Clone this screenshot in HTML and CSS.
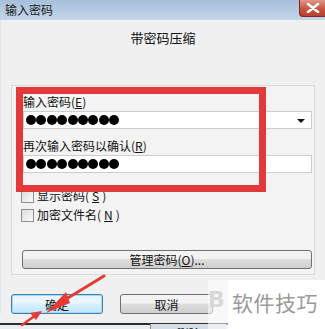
FILE: index.html
```html
<!DOCTYPE html>
<html lang="zh-CN">
<head>
  <meta charset="UTF-8">
  <title>输入密码</title>
  <link rel="stylesheet" href="styles.css">
</head>
<body>
  <div class="window">
    <div class="titlebar">
      <span class="title">输入密码</span>
      <span class="close">
        <svg width="14" height="10" viewBox="0 0 14 10"><path d="M2 1 L12 9 M12 1 L2 9" stroke="#fff" stroke-width="2.6" stroke-linecap="round"/></svg>
      </span>
    </div>

    <div class="frame">
      <div class="heading">带密码压缩</div>

      <div class="panel">
        <div class="label">输入密码(<u>E</u>)</div>
        <div class="field combo">
          <span class="dots"><i></i><i></i><i></i><i></i><i></i><i></i><i></i><i></i><i></i></span>
          <span class="arrow"></span>
        </div>
        <div class="label second">再次输入密码以确认(<u>R</u>)</div>
        <div class="field">
          <span class="dots"><i></i><i></i><i></i><i></i><i></i><i></i><i></i><i></i><i></i></span>
        </div>

        <label class="check first"><span class="box"></span>显示密码(<u>S</u>)</label>
        <label class="check"><span class="box"></span>加密文件名(<u>N</u>)</label>

        <div class="btn wide">管理密码(<u>O</u>)...</div>
      </div>

      <div class="actions">
        <div class="btn default">确定</div>
        <div class="btn">取消</div>
      </div>
    </div>

    <div class="under">
      <span class="tab">删除</span>
    </div>

    <div class="highlight"></div>

    <svg class="arrows" width="325" height="329" viewBox="0 0 325 329">
      <path d="M104 276 L58 304" stroke="#e53b33" stroke-width="3" stroke-linecap="round"/>
      <path d="M46 313 L66 292 L70 303 Z" fill="#e53b33"/>
      <path d="M22 325 L36 315" stroke="#e53b33" stroke-width="2.5" stroke-linecap="round"/>
      <path d="M42 311 L30 313 L36 320 Z" fill="#e53b33"/>
    </svg>

    <div class="watermark">
      <span class="logo">B</span>
      <span class="wm-text">软件技巧</span>
    </div>
  </div>
</body>
</html>
```

FILE: styles.css
```css
body {
  margin: 0;
  padding: 0;
  background: #f0f0f0;
  font-family: "Noto Sans CJK SC", "DejaVu Sans", sans-serif;
  font-size: 12px;
  color: #111;
  overflow: hidden;
}

u {
  text-decoration: underline;
}

.window {
  position: relative;
  width: 325px;
  height: 329px;
  overflow: hidden;
}

.titlebar {
  height: 20px;
  display: flex;
  align-items: flex-start;
  justify-content: space-between;
  background: linear-gradient(#a7bfdb, #c3d6ea);
}

.title {
  padding: 2px 0 0 5px;
  font-size: 12px;
  line-height: 16px;
  color: #1b1b1b;
}

.close {
  width: 28px;
  height: 17px;
  margin-right: -2px;
  display: flex;
  align-items: center;
  justify-content: center;
  border: 1px solid #7a2a22;
  border-top: none;
  border-radius: 0 0 4px 4px;
  background: linear-gradient(#e0998a, #c85442 55%, #b8402f);
  box-sizing: border-box;
}

.frame {
  display: flex;
  flex-direction: column;
  padding: 0 10px 0 10px;
  border-left: 1px solid #dfe8f2;
}

.heading {
  margin-top: 9px;
  text-align: center;
  font-size: 13px;
  line-height: 18px;
}

.panel {
  margin-top: 38px;
  height: 190px;
  box-sizing: border-box;
  padding: 9px 2px 0 11px;
  border: 1px solid #dadada;
  background: #f3f3f3;
  display: flex;
  flex-direction: column;
}

.label {
  line-height: 14px;
  height: 14px;
}

.label.second {
  margin-top: 10px;
}

.field {
  position: relative;
  margin-top: 2px;
  height: 18px;
  box-sizing: border-box;
  border: 1px solid #c9ced6;
  background: #fff;
  display: flex;
  align-items: center;
  padding-left: 2px;
}

.dots {
  display: flex;
  gap: 0.4px;
}

.dots i {
  width: 10px;
  height: 10px;
  border-radius: 50%;
  background: #000;
}

.arrow {
  position: absolute;
  right: 6px;
  top: 7px;
  border-left: 4px solid transparent;
  border-right: 4px solid transparent;
  border-top: 4px solid #111;
}

.check {
  display: flex;
  align-items: center;
  gap: 3px;
  margin-left: -2px;
  line-height: 14px;
  margin-top: 5px;
}

.check.first {
  margin-top: 16px;
}

.box {
  width: 13px;
  height: 13px;
  box-sizing: border-box;
  border: 1px solid #8f8f8f;
  background: linear-gradient(135deg, #dcdcdc, #fafafa);
}

.btn {
  height: 19px;
  box-sizing: border-box;
  border: 1px solid #707070;
  border-radius: 3px;
  background: linear-gradient(#f3f3f3 45%, #dddddd 50%, #cfcfcf);
  display: flex;
  align-items: center;
  justify-content: center;
  font-size: 12px;
}

.btn.wide {
  margin-top: 28px;
  margin-left: -1px;
}

.actions {
  margin-top: 19px;
  display: flex;
  gap: 17px;
}

.actions .btn {
  width: 93px;
  height: 20px;
}

.actions .btn.default {
  width: 92px;
  border: 1px solid #3c7fb1;
  background: linear-gradient(#eaf6fd 45%, #d9f0fc 50%, #bee6fd);
  box-shadow: inset 0 0 0 1px #a7d9f5;
}

.under {
  margin-top: 9px;
  height: 8px;
  border-top: 2px solid #2d2d2d;
  background: #e9eef4;
  position: relative;
}

.tab {
  position: absolute;
  left: 150px;
  top: -1px;
  width: 75px;
  height: 10px;
  border-left: 1px solid #8a8a8a;
  background: #d5dde6;
  text-align: center;
  font-size: 12px;
  line-height: 20px;
  overflow: hidden;
}

.highlight {
  position: absolute;
  left: 16px;
  top: 87px;
  width: 250px;
  height: 105px;
  box-sizing: border-box;
  border: 7px solid #e23a3a;
}

.arrows {
  position: absolute;
  left: 0;
  top: 0;
}

.watermark {
  position: absolute;
  left: 208px;
  top: 280px;
  width: 117px;
  height: 49px;
  display: flex;
  align-items: center;
}

.logo {
  width: 20px;
  height: 49px;
  color: #d8d8d8;
  font-family: "DejaVu Sans", sans-serif;
  font-weight: bold;
  font-size: 22px;
  line-height: 40px;
  background: rgba(255, 255, 255, 0.55);
}

.wm-text {
  flex: 1;
  height: 49px;
  background: #fff;
  color: #9a9a9a;
  font-size: 21px;
  line-height: 44px;
  padding-left: 4px;
  letter-spacing: 0.5px;
}
```
